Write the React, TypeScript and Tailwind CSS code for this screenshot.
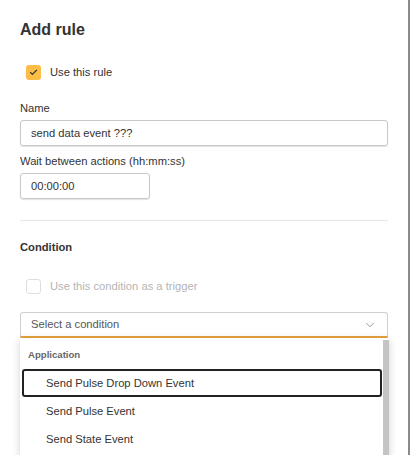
import { Check, ChevronDown } from "lucide-react";

const items = ["Send Pulse Drop Down Event", "Send Pulse Event", "Send State Event"];

const App = () => {
  return (
    <div className="relative h-[455px] w-[410px] overflow-hidden bg-white font-['Liberation_Sans',Arial,sans-serif] text-[#333]">
      <div className="h-full border-r-2 border-[#8a8a8a] px-5 pt-[18px] text-[11.2px]">
        <h2 className="h-6 text-[16px] font-bold leading-6 text-[#333]">Add rule</h2>

        <label className="mt-[23px] flex h-[15px] items-center gap-[9px] pl-[6px] leading-[15px]">
          <span className="flex h-[15px] w-[15px] items-center justify-center rounded-[3px] bg-[#fbbd45]">
            <Check size={9} strokeWidth={3} className="text-[#333]" />
          </span>
          Use this rule
        </label>

        <div className="mt-[20px] h-4 leading-4">Name</div>
        <div className="mt-[4px] flex h-[26px] items-center rounded-[3px] border border-[#c8c8c8] px-[10px] shadow-[0_1px_1px_rgba(0,0,0,0.12)]">
          send data event ???
        </div>

        <div className="mt-[7px] h-4 leading-4">Wait between actions (hh:mm:ss)</div>
        <div className="mt-[4px] flex h-[26px] w-[130px] items-center rounded-[3px] border border-[#c8c8c8] px-[10px] shadow-[0_1px_1px_rgba(0,0,0,0.12)]">
          00:00:00
        </div>

        <div className="mt-[21px] border-t border-[#e6e6e6]" />

        <h3 className="mt-[18px] h-4 font-bold leading-4">Condition</h3>

        <label className="mt-[24px] flex h-[15px] items-center gap-[9px] pl-[6px] leading-[15px] text-[#b5b5b5]">
          <span className="h-[15px] w-[15px] rounded-[3px] border border-[#dedede]" />
          Use this condition as a trigger
        </label>

        <div className="relative mt-[18px]">
          <div className="flex h-[26px] items-center justify-between rounded-t-[3px] border border-b-2 border-[#d0d0d0] border-b-[#e8a33d] px-[10px] text-[#555]">
            Select a condition
            <ChevronDown size={14} strokeWidth={1.5} className="text-[#888]" />
          </div>

          <div className="absolute left-0 right-[-1px] top-[26px] h-[130px] bg-white shadow-[0_2px_8px_rgba(0,0,0,0.18)]">
            <div className="flex h-full">
              <div className="flex-1 pl-[2px] pt-[9px]">
                <div className="h-4 pl-[6px] text-[9.6px] font-bold leading-4 text-[#666]">Application</div>
                <ul className="mt-[6px]">
                  {items.map((item, i) => (
                    <li
                      key={item}
                      className={`flex h-[28px] items-center rounded-[3px] pl-[22px] ${
                        i === 0 ? "border-2 border-[#222]" : "border-2 border-transparent"
                      }`}
                    >
                      {item}
                    </li>
                  ))}
                </ul>
              </div>
              <div className="ml-[1px] mt-[2px] w-[6px] bg-[#c4c4c4]" />
            </div>
          </div>
        </div>
      </div>
    </div>
  );
};

export default App;
